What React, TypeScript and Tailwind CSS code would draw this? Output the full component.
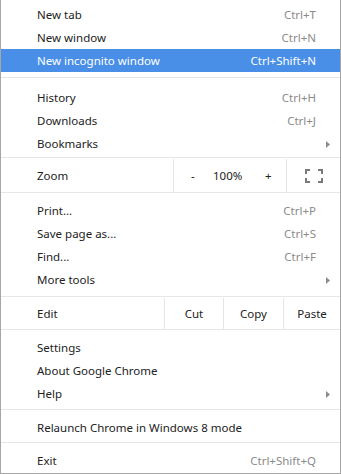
import React from "react";

type Item = { label: string; shortcut?: string; submenu?: boolean; active?: boolean };

const Arrow = () => (
  <svg width="4" height="7" viewBox="0 0 4 7" className="fill-[#8c8c8c]">
    <path d="M0 0 L4 3.5 L0 7 Z" />
  </svg>
);

const FullscreenIcon = () => (
  <svg width="18" height="14" viewBox="0 0 18 14" fill="none" stroke="#7a7a7a" strokeWidth="2">
    <path d="M1 5 V1 H5" />
    <path d="M13 1 H17 V5" />
    <path d="M17 9 V13 H13" />
    <path d="M5 13 H1 V9" />
  </svg>
);

const Row = ({ item }: { item: Item }) => (
  <div
    className={
      item.active
        ? "flex h-[23px] items-center bg-[#4a8fe7] pl-[36px] pr-[24px] pt-px text-white"
        : "flex h-[23px] items-center pl-[36px] pr-[24px] pt-px text-[#222222]"
    }
  >
    <span className="flex-1">{item.label}</span>
    {item.shortcut && (
      <span className={item.active ? "text-white" : "text-[#8a8a8a]"}>{item.shortcut}</span>
    )}
    {item.submenu && (
      <span className="-mr-[14px] flex items-center">
        <Arrow />
      </span>
    )}
  </div>
);

const Sep = ({ className }: { className: string }) => <div className={"h-px bg-[#e6e6e6] " + className} />;

const App = () => {
  return (
    <div className="h-[474px] w-[341px] overflow-hidden bg-white font-['Noto_Sans',sans-serif] text-[11.5px] leading-none">
      <div className="h-[474px] border-x border-b border-[#a6a6a6] pt-[3px]">
        {[
          { label: "New tab", shortcut: "Ctrl+T" },
          { label: "New window", shortcut: "Ctrl+N" },
          { label: "New incognito window", shortcut: "Ctrl+Shift+N", active: true },
        ].map((it) => (
          <Row key={it.label} item={it} />
        ))}
        <Sep className="mt-[5px] mb-[8px]" />
        {[
          { label: "History", shortcut: "Ctrl+H" },
          { label: "Downloads", shortcut: "Ctrl+J" },
          { label: "Bookmarks", submenu: true },
        ].map((it) => (
          <Row key={it.label} item={it} />
        ))}
        {/* Zoom */}
        <div className="mt-[2px] flex h-[36px] border-y border-[#e6e6e6] pt-px text-[#222222]">
          <div className="flex flex-1 items-center pl-[36px]">Zoom</div>
          <div className="flex w-[113px] items-center border-l border-[#e6e6e6] pl-[17px]">
            <span className="w-[22px]">-</span>
            <span className="w-[52px]">100%</span>
            <span>+</span>
          </div>
          <div className="flex w-[54px] items-center justify-center border-l border-[#e6e6e6]">
            <FullscreenIcon />
          </div>
        </div>
        <div className="h-[6px]" />
        {[
          { label: "Print...", shortcut: "Ctrl+P" },
          { label: "Save page as...", shortcut: "Ctrl+S" },
          { label: "Find...", shortcut: "Ctrl+F" },
          { label: "More tools", submenu: true },
        ].map((it) => (
          <Row key={it.label} item={it} />
        ))}
        {/* Edit */}
        <div className="mt-[5px] flex h-[34px] border-y border-[#e6e6e6] pt-px text-[#222222]">
          <div className="flex flex-1 items-center pl-[36px]">Edit</div>
          <div className="flex w-[59px] items-center justify-center border-l border-[#e6e6e6]">Cut</div>
          <div className="flex w-[60px] items-center justify-center border-l border-[#e6e6e6]">Copy</div>
          <div className="flex w-[57px] items-center justify-center border-l border-[#e6e6e6]">Paste</div>
        </div>
        <div className="h-[6px]" />
        {[
          { label: "Settings" },
          { label: "About Google Chrome" },
          { label: "Help", submenu: true },
        ].map((it) => (
          <Row key={it.label} item={it} />
        ))}
        <Sep className="mt-[4px] mb-[6px]" />
        <Row item={{ label: "Relaunch Chrome in Windows 8 mode" }} />
        <Sep className="mt-[3px] mb-[6px]" />
        <Row item={{ label: "Exit", shortcut: "Ctrl+Shift+Q" }} />
      </div>
    </div>
  );
};

export default App;
